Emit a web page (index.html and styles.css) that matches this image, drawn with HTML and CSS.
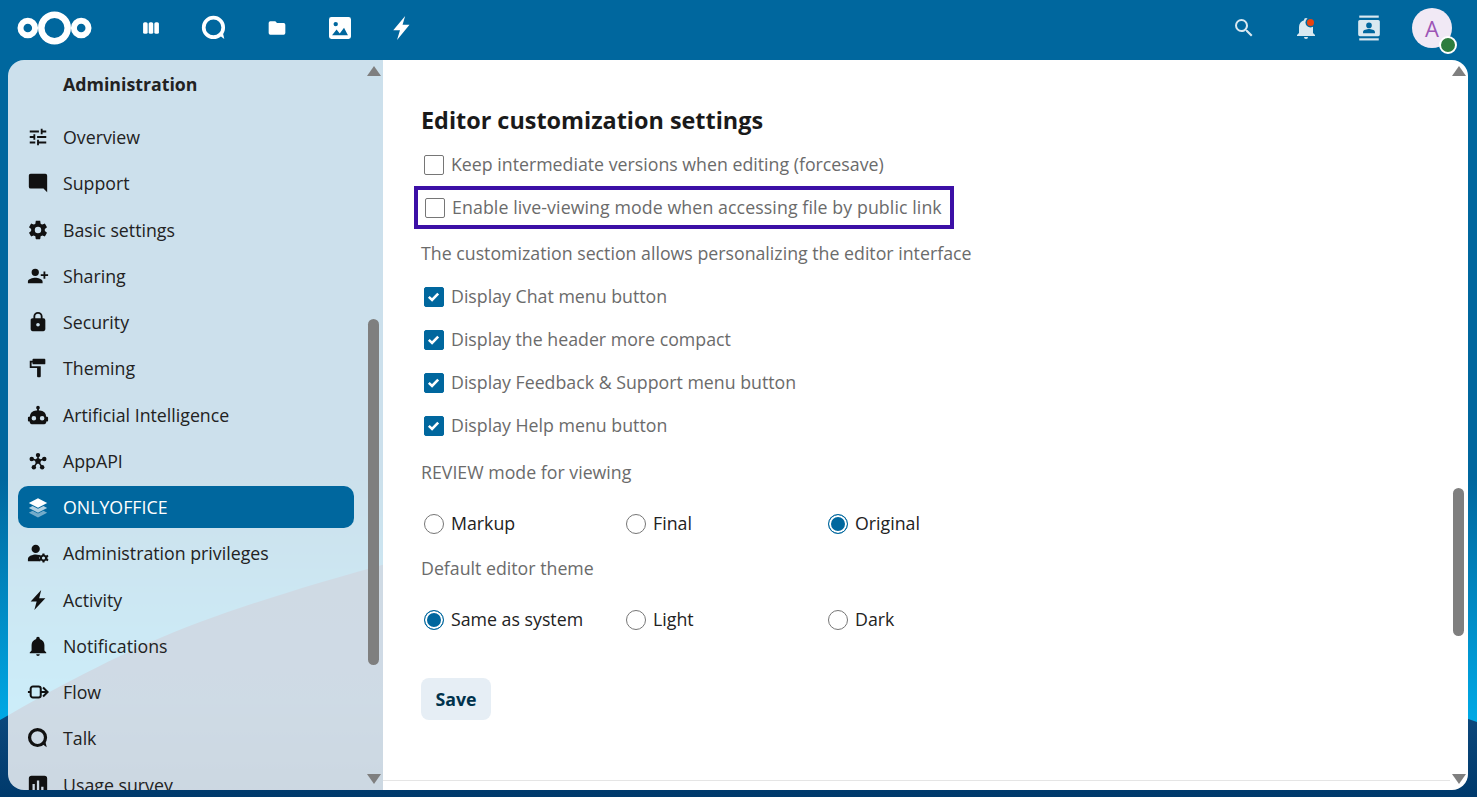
FILE: index.html
```html
<!DOCTYPE html>
<html lang="en">
<head>
    <meta charset="UTF-8">
    <title>ONLYOFFICE - Administration settings</title>
    <link rel="stylesheet" href="styles.css">
</head>
<body>
    <!-- background picture, sits under everything -->
    <svg class="backdrop" viewBox="0 0 1477 797" preserveAspectRatio="none">
        <defs>
            <linearGradient id="sky" x1="0" y1="0" x2="0" y2="1">
                <stop offset="0" stop-color="#00679e"/>
                <stop offset="0.6" stop-color="#00679e"/>
                <stop offset="0.9" stop-color="#00a8e4"/>
                <stop offset="1" stop-color="#00b4ee"/>
            </linearGradient>
            <linearGradient id="hill" x1="0" y1="0" x2="0" y2="1">
                <stop offset="0" stop-color="#12457a"/>
                <stop offset="0.6" stop-color="#0e4a7e"/>
                <stop offset="1" stop-color="#003a6c"/>
            </linearGradient>
        </defs>
        <rect width="1477" height="797" fill="url(#sky)"/>
        <path d="M0 720C60 685 130 648 200 622C260 600 320 582 400 560C800 560 1250 640 1477 722V797H0Z" fill="url(#hill)"/>
    </svg>

    <header class="topbar">
        <a class="logo" href="#">
            <svg width="75" height="36" viewBox="0 0 75 36"><g fill="none" stroke="#fff"><circle cx="37.5" cy="18" r="13.2" stroke-width="6.5"/><circle cx="10.8" cy="18" r="7.3" stroke-width="6"/><circle cx="64.2" cy="18" r="7.3" stroke-width="6"/></g></svg>
        </a>
        <nav class="apps">
            <a href="#"><svg class="ico" viewBox="0 0 24 24" fill="#fff"><rect x="2.500" y="5" width="5.500" height="14" rx="2"/><rect x="9.200" y="5" width="5.500" height="14" rx="2"/><rect x="16" y="5" width="5.500" height="14" rx="2"/></svg></a>
            <a href="#"><svg class="ico ico-lg" viewBox="0 0 24 24"><circle cx="11.500" cy="11.500" r="9" fill="none" stroke="#fff" stroke-width="3.400"/><path d="M16 18l5.500 4.200-1.600-7z" fill="#fff"/></svg></a>
            <a href="#"><svg class="ico" viewBox="0 0 24 24" fill="#fff"><path d="M10 4H4a2 2 0 0 0-2 2v12a2 2 0 0 0 2 2h16a2 2 0 0 0 2-2V8a2 2 0 0 0-2-2h-8z"/></svg></a>
            <a href="#"><svg class="ico ico-img" viewBox="3 3 18 18" fill="#fff"><path d="M21 19V5a2 2 0 0 0-2-2H5a2 2 0 0 0-2 2v14a2 2 0 0 0 2 2h14a2 2 0 0 0 2-2zM8.500 7a1.800 1.800 0 1 0 0 3.600 1.800 1.800 0 0 0 0-3.600zM5.500 18l3.700-4.800 2.600 3.200 3.500-4.600 3.200 6.200z" fill-rule="evenodd"/></svg></a>
            <a href="#"><svg class="ico ico-lg" viewBox="0 0 24 24" fill="#fff"><path d="M14 1L3 14h6.200L6.500 23 18 9h-6.400z"/></svg></a>
        </nav>
        <div class="tools">
            <a href="#" class="search"><svg class="ico" viewBox="0 0 24 24" fill="#d9e8f0"><path d="M9.500,3A6.500,6.500 0 0,1 16,9.500C16,11.110 15.410,12.590 14.440,13.730L14.710,14H15.500L20.500,19L19,20.500L14,15.500V14.710L13.730,14.440C12.590,15.410 11.110,16 9.500,16A6.500,6.500 0 0,1 3,9.500A6.500,6.500 0 0,1 9.500,3M9.500,5C7,5 5,7 5,9.500C5,12 7,14 9.500,14C12,14 14,12 14,9.500C14,7 12,5 9.500,5Z"/></svg></a>
            <a href="#" class="bell"><svg class="ico" viewBox="0 0 24 24" fill="#d9e8f0"><path d="M21,19V20H3V19L5,17V11C5,7.900 7.030,5.170 10,4.290C10,4.190 10,4.100 10,4A2,2 0 0,1 12,2A2,2 0 0,1 14,4C14,4.100 14,4.190 14,4.290C16.970,5.170 19,7.900 19,11V17L21,19M14,21A2,2 0 0,1 12,23A2,2 0 0,1 10,21"/></svg><span class="dot"></span></a>
            <a href="#"><svg class="ico ico-lg" viewBox="0 0 24 24" fill="#d9e8f0"><rect x="3" y="0.500" width="18" height="2"/><rect x="3" y="21.500" width="18" height="2"/><path d="M3.500 4.500h17a1.500 1.500 0 0 1 1.500 1.500v12a1.500 1.500 0 0 1-1.500 1.500h-17A1.500 1.500 0 0 1 2 18V6a1.500 1.500 0 0 1 1.500-1.500zM12 7a2.600 2.600 0 1 0 0 5.200A2.600 2.600 0 0 0 12 7zM6.500 16.800h11v-1.200c0-1.800-3.600-2.600-5.500-2.600s-5.500.8-5.500 2.600z" fill-rule="evenodd"/></svg></a>
            <div class="avatar">A<span class="status"></span></div>
        </div>
    </header>

    <div class="app">
        <aside class="sidebar">
            <h2 class="side-title">Administration</h2>
            <ul class="side-list">
                <li><a href="#"><svg class="ico" viewBox="0 0 24 24"><path d="M3,17V19H9V17H3M3,5V7H13V5H3M13,21V19H21V17H13V15H11V21H13M7,9V11H3V13H7V15H9V9H7M21,13V11H11V13H21M15,9H17V7H21V5H17V3H15V9Z"/></svg>Overview</a></li>
                <li><a href="#"><svg class="ico flip" viewBox="0 0 24 24"><path d="M20,2H4A2,2 0 0,0 2,4V22L6,18H20A2,2 0 0,0 22,16V4C22,2.890 21.100,2 20,2Z"/></svg>Support</a></li>
                <li><a href="#"><svg class="ico" viewBox="0 0 24 24"><path d="M12,15.500A3.500,3.500 0 0,1 8.500,12A3.500,3.500 0 0,1 12,8.500A3.500,3.500 0 0,1 15.500,12A3.500,3.500 0 0,1 12,15.500M19.430,12.970C19.470,12.650 19.500,12.330 19.500,12C19.500,11.670 19.470,11.340 19.430,11L21.540,9.370C21.730,9.220 21.780,8.950 21.660,8.730L19.660,5.270C19.540,5.050 19.270,4.960 19.050,5.050L16.560,6.050C16.040,5.660 15.500,5.320 14.870,5.070L14.500,2.420C14.460,2.180 14.250,2 14,2H10C9.750,2 9.540,2.180 9.500,2.420L9.130,5.070C8.500,5.320 7.960,5.660 7.440,6.050L4.950,5.050C4.730,4.960 4.460,5.050 4.340,5.270L2.340,8.730C2.210,8.950 2.270,9.220 2.460,9.370L4.570,11C4.530,11.340 4.500,11.670 4.500,12C4.500,12.330 4.530,12.650 4.570,12.970L2.460,14.630C2.270,14.780 2.210,15.050 2.340,15.270L4.340,18.730C4.460,18.950 4.730,19.030 4.950,18.950L7.440,17.940C7.960,18.340 8.500,18.680 9.130,18.930L9.500,21.580C9.540,21.820 9.750,22 10,22H14C14.250,22 14.460,21.820 14.500,21.580L14.870,18.930C15.500,18.670 16.040,18.340 16.560,17.940L19.050,18.950C19.270,19.030 19.540,18.950 19.660,18.730L21.660,15.270C21.780,15.050 21.730,14.780 21.540,14.630L19.430,12.970Z"/></svg>Basic settings</a></li>
                <li><a href="#"><svg class="ico flip" viewBox="0 0 24 24"><path d="M15,14C12.330,14 7,15.330 7,18V20H23V18C23,15.330 17.670,14 15,14M6,10V7H4V10H1V12H4V15H6V12H9V10M15,12A4,4 0 0,0 19,8A4,4 0 0,0 15,4A4,4 0 0,0 11,8A4,4 0 0,0 15,12Z"/></svg>Sharing</a></li>
                <li><a href="#"><svg class="ico" viewBox="0 0 24 24"><path d="M12,17A2,2 0 0,0 14,15C14,13.890 13.100,13 12,13A2,2 0 0,0 10,15A2,2 0 0,0 12,17M18,8A2,2 0 0,1 20,10V20A2,2 0 0,1 18,22H6A2,2 0 0,1 4,20V10C4,8.890 4.900,8 6,8H7V6A5,5 0 0,1 12,1A5,5 0 0,1 17,6V8H18M12,3A3,3 0 0,0 9,6V8H15V6A3,3 0 0,0 12,3Z"/></svg>Security</a></li>
                <li><a href="#"><svg class="ico flip" viewBox="0 0 24 24"><path d="M18,4V3A1,1 0 0,0 17,2H5A1,1 0 0,0 4,3V7A1,1 0 0,0 5,8H17A1,1 0 0,0 18,7V6H19V10H9V21A1,1 0 0,0 10,22H12A1,1 0 0,0 13,21V12H21V4H18Z"/></svg>Theming</a></li>
                <li><a href="#"><svg class="ico" viewBox="0 0 24 24"><path d="M12,2A2,2 0 0,1 14,4C14,4.740 13.600,5.390 13,5.730V7H14A7,7 0 0,1 21,14H22A1,1 0 0,1 23,15V18A1,1 0 0,1 22,19H21V20A2,2 0 0,1 19,22H5A2,2 0 0,1 3,20V19H2A1,1 0 0,1 1,18V15A1,1 0 0,1 2,14H3A7,7 0 0,1 10,7H11V5.730C10.400,5.390 10,4.740 10,4A2,2 0 0,1 12,2M7.500,13A2.500,2.500 0 0,0 5,15.500A2.500,2.500 0 0,0 7.500,18A2.500,2.500 0 0,0 10,15.500A2.500,2.500 0 0,0 7.500,13M16.500,13A2.500,2.500 0 0,0 14,15.500A2.500,2.500 0 0,0 16.500,18A2.500,2.500 0 0,0 19,15.500A2.500,2.500 0 0,0 16.500,13Z"/></svg>Artificial Intelligence</a></li>
                <li><a href="#"><svg class="ico" viewBox="-2 -3 28 28"><g stroke="#111" stroke-width="2"><path d="M12 11V4M12 11L4.500 8.500M12 11l7.500-2.500M12 11l-5 7.500M12 11l5 7.500"/></g><circle cx="12" cy="11" r="3.600"/><circle cx="12" cy="3.500" r="2.800"/><circle cx="4" cy="8.500" r="2.800"/><circle cx="20" cy="8.500" r="2.800"/><circle cx="6.700" cy="19" r="2.800"/><circle cx="17.300" cy="19" r="2.800"/></svg>AppAPI</a></li>
                <li class="active"><a href="#"><svg class="ico" viewBox="0 0 24 24"><path d="M12 2.500l10 5.200-10 5.200L2 7.700z"/><path d="M6 10.900l-4 2.100 10 5.200L22 13l-4-2.100-6 3.100z" opacity=".7"/><path d="M6 16.100l-4 2.100 10 5.200 10-5.200-4-2.100-6 3.100z" opacity=".45"/></svg>ONLYOFFICE</a></li>
                <li><a href="#"><svg class="ico" viewBox="0 0 24 24"><circle cx="9.500" cy="7.500" r="4.500"/><path d="M1 21v-2.500c0-3.400 5.500-5 8.500-5 1.200 0 2.500.2 3.700.6-.5 2.600 0 5 1.600 6.900z"/><path d="M19 12.500l.4 1.600 1.500.6 1.400-.8 1.200 1.600-1.200 1.100v1.600l1.200 1.100-1.200 1.600-1.400-.8-1.500.6-.4 1.600h-2l-.4-1.600-1.500-.6-1.400.8-1.200-1.600 1.200-1.100v-1.600L12.400 15.500l1.200-1.600 1.400.8 1.500-.6.4-1.600zM18 15.800a1.700 1.700 0 1 0 0 3.400 1.700 1.700 0 0 0 0-3.400z" fill-rule="evenodd"/></svg>Administration privileges</a></li>
                <li><a href="#"><svg class="ico" viewBox="0 0 24 24"><path d="M15.500 1L4 13.500h6.500L8 23l12-13h-6.700z"/></svg>Activity</a></li>
                <li><a href="#"><svg class="ico" viewBox="0 0 24 24"><path d="M21,19V20H3V19L5,17V11C5,7.900 7.030,5.170 10,4.290C10,4.190 10,4.100 10,4A2,2 0 0,1 12,2A2,2 0 0,1 14,4C14,4.100 14,4.190 14,4.290C16.970,5.170 19,7.900 19,11V17L21,19M14,21A2,2 0 0,1 12,23A2,2 0 0,1 10,21"/></svg>Notifications</a></li>
                <li><a href="#"><svg class="ico" viewBox="0 0 24 24"><g fill="none" stroke="#111" stroke-width="2.200"><rect x="4" y="6" width="11" height="12" rx="2.500"/><path d="M1 12h3M15 12h7M17.500 7l5 5-5 5"/></g></svg>Flow</a></li>
                <li><a href="#"><svg class="ico" viewBox="0 0 24 24"><circle cx="11.500" cy="11.500" r="8.700" fill="none" stroke="#111" stroke-width="3.500"/><path d="M16 18l5.500 4.200-1.600-7z"/></svg>Talk</a></li>
                <li><a href="#"><svg class="ico" viewBox="0 0 24 24"><path d="M5 2h14a3 3 0 0 1 3 3v14a3 3 0 0 1-3 3H5a3 3 0 0 1-3-3V5a3 3 0 0 1 3-3zM6 19h2.500v-8H6zm4.800 0h2.500V7h-2.500zm4.700 0H18v-5h-2.500z" fill-rule="evenodd"/></svg>Usage survey</a></li>
            </ul>
            <div class="scrollbar">
                <span class="arrow-up"></span>
                <span class="thumb side-thumb"></span>
                <span class="arrow-down"></span>
            </div>
        </aside>

        <main class="content">
            <h2 class="section-title">Editor customization settings</h2>

            <label class="opt"><span class="box"></span>Keep intermediate versions when editing (forcesave)</label>
            <label class="opt marked"><span class="box"></span>Enable live-viewing mode when accessing file by public link</label>

            <p class="desc first">The customization section allows personalizing the editor interface</p>
            <label class="opt"><span class="box on"><svg viewBox="0 0 20 20"><path d="M4.500 10.500l3.800 3.600 7.200-7.600" fill="none" stroke="#fff" stroke-width="3"/></svg></span>Display Chat menu button</label>
            <label class="opt"><span class="box on"><svg viewBox="0 0 20 20"><path d="M4.500 10.500l3.800 3.600 7.200-7.600" fill="none" stroke="#fff" stroke-width="3"/></svg></span>Display the header more compact</label>
            <label class="opt"><span class="box on"><svg viewBox="0 0 20 20"><path d="M4.500 10.500l3.800 3.600 7.200-7.600" fill="none" stroke="#fff" stroke-width="3"/></svg></span>Display Feedback &amp; Support menu button</label>
            <label class="opt"><span class="box on"><svg viewBox="0 0 20 20"><path d="M4.500 10.500l3.800 3.600 7.200-7.600" fill="none" stroke="#fff" stroke-width="3"/></svg></span>Display Help menu button</label>

            <p class="desc review">REVIEW mode for viewing</p>
            <div class="radios">
                <label class="radio"><span class="round"></span>Markup</label>
                <label class="radio"><span class="round"></span>Final</label>
                <label class="radio"><span class="round on"></span>Original</label>
            </div>

            <p class="desc theme">Default editor theme</p>
            <div class="radios">
                <label class="radio"><span class="round on"></span>Same as system</label>
                <label class="radio"><span class="round"></span>Light</label>
                <label class="radio"><span class="round"></span>Dark</label>
            </div>

            <button class="save">Save</button>

            <div class="rule"></div>
            <div class="scrollbar">
                <span class="arrow-up"></span>
                <span class="thumb main-thumb"></span>
                <span class="arrow-down"></span>
            </div>
        </main>
    </div>
</body>
</html>
```
FILE: styles.css
```css
* {
    box-sizing: border-box;
}
html, body {
    height: 100%;
}
body {
    margin: 0;
    overflow: hidden;
    display: flex;
    flex-direction: column;
    font-family: "Open Sans", "Noto Sans", sans-serif;
    font-size: 17.75px;
    color: #222;
}
a {
    color: inherit;
    text-decoration: none;
}
.backdrop {
    position: absolute;
    top: 0;
    left: 0;
    width: 100%;
    height: 100%;
    z-index: -1;
}
.ico {
    width: 20px;
    height: 20px;
}
.ico-lg {
    width: 26px;
    height: 26px;
}
.ico-img {
    width: 22px;
    height: 22px;
}
.flip {
    transform: scaleX(-1);
}

/* top bar */
.topbar {
    flex: 0 0 60px;
    display: flex;
    align-items: center;
    padding-left: 17px;
    padding-bottom: 4px;
}
.logo {
    display: flex;
    width: 102px;
}
.apps, .tools {
    display: flex;
    align-items: center;
}
.apps a, .tools a {
    width: 63px;
    display: flex;
    justify-content: center;
    align-items: center;
}
.tools {
    margin-left: auto;
    padding-right: 25px;
}
.tools a {
    position: relative;
}
.tools .search {
    padding-left: 2px;
}
.tools .ico {
    width: 24px;
    height: 24px;
}
.tools .ico-lg {
    width: 26px;
    height: 26px;
}
.dot {
    position: absolute;
    top: 3px;
    left: 33px;
    width: 7px;
    height: 7px;
    border-radius: 50%;
    background: #e9430f;
    box-shadow: 0 0 0 1.5px #00679e;
}
.avatar {
    position: relative;
    width: 40px;
    height: 40px;
    margin-left: 12px;
    border-radius: 50%;
    background: #f1e9f5;
    color: #9d55b5;
    font-size: 22px;
    display: flex;
    align-items: center;
    justify-content: center;
}
.status {
    position: absolute;
    right: -5px;
    bottom: -6px;
    width: 18px;
    height: 18px;
    border-radius: 50%;
    background: #2e7d3e;
    border: 2px solid #fff;
}

/* app frame */
.app {
    flex: 1;
    min-height: 0;
    display: flex;
    margin: 0 9px 7px 8px;
}
.sidebar {
    position: relative;
    flex: 0 0 375px;
    overflow: hidden;
    padding: 12px 0 0 10px;
    background: rgba(255, 255, 255, 0.8);
    border-radius: 16px 0 0 16px;
}
.side-title {
    margin: 0 0 19px 45px;
    height: 25px;
    line-height: 25px;
    font-size: 17.75px;
    font-weight: 700;
}
.side-list {
    list-style: none;
    margin: 0;
    padding: 0;
    width: 336px;
}
.side-list li {
    height: 42px;
    margin-bottom: 4.25px;
    border-radius: 10px;
}
.side-list a {
    height: 100%;
    display: flex;
    align-items: center;
    color: #222;
}
.side-list .ico {
    width: 22px;
    height: 22px;
    margin: 0 14px 0 9px;
    fill: #111;
    flex: none;
}
.side-list .active {
    background: #00679e;
}
.side-list .active a {
    color: #fff;
}
.side-list .active .ico {
    fill: #fff;
}

/* windows style scrollbars */
.scrollbar {
    position: absolute;
    top: 0;
    right: 4px;
    bottom: 0;
    width: 11px;
}
.arrow-up, .arrow-down {
    position: absolute;
    left: -1px;
    width: 0;
    height: 0;
    border-left: 7px solid transparent;
    border-right: 7px solid transparent;
}
.arrow-up {
    top: 6px;
    border-bottom: 10px solid #7f7f7f;
}
.arrow-down {
    bottom: 6px;
    border-top: 10px solid #7f7f7f;
}
.thumb {
    position: absolute;
    left: 0;
    width: 11px;
    background: #7f7f7f;
    border-radius: 6px;
}
.side-thumb {
    top: 259px;
    height: 346px;
}
.main-thumb {
    top: 428px;
    height: 148px;
}

/* settings page */
.content {
    position: relative;
    flex: 1;
    overflow: hidden;
    padding: 44px 0 0 38px;
    background: #fff;
    border-radius: 0 16px 16px 0;
}
.section-title {
    margin: 0 0 5px;
    height: 33px;
    line-height: 33px;
    font-size: 23.4px;
    font-weight: 700;
    color: #1a1a1a;
}
.opt, .desc, .radios {
    display: flex;
    align-items: center;
    height: 43px;
    margin: 0;
}
.opt {
    color: #6b6b6b;
}
.desc {
    color: #6b6b6b;
}
.box, .round {
    flex: none;
    width: 20px;
    height: 20px;
    margin: 2px 7px 0 3px;
    border: 1.5px solid #767676;
    background: #fff;
}
.box {
    border-radius: 2px;
}
.box.on {
    background: #00679e;
    border-color: #00679e;
}
.box svg {
    display: block;
    width: 17px;
    height: 17px;
}
.round {
    border-radius: 50%;
}
.round.on {
    border-color: #00679e;
    background: #00679e;
    box-shadow: inset 0 0 0 2px #fff;
}
.marked {
    width: 540px;
    margin: 1px 0 0 -7px;
    padding: 0 0 2px 3px;
    border: 4px solid #3c0fa6;
    letter-spacing: 0.09px;
}
.marked .box {
    margin-left: 4px;
    margin-right: 7px;
}
.first {
    margin-top: 2px;
}
.review {
    margin-top: 4px;
}
.theme {
    margin-top: 2px;
}
.radios {
    margin-top: 8px;
}
.radio {
    width: 202px;
    display: flex;
    align-items: center;
    color: #222;
}
.save {
    display: block;
    margin-top: 38px;
    width: 70px;
    height: 42px;
    padding: 0;
    border: 0;
    border-radius: 8px;
    background: #e6eef5;
    color: #00324c;
    font-family: inherit;
    font-size: 17.75px;
    font-weight: 700;
}
.rule {
    position: absolute;
    left: 0;
    right: 18px;
    top: 720px;
    height: 1px;
    background: #e5e5e5;
}
```
